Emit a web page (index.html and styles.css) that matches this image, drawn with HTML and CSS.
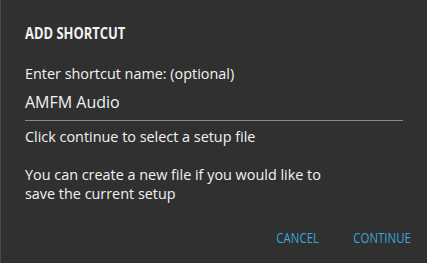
FILE: index.html
```html
<!DOCTYPE html>
<html>
<head>
<meta charset="utf-8">
<link rel="stylesheet" href="styles.css">
</head>
<body>
<div class="dialog">
  <h1 class="title">ADD SHORTCUT</h1>
  <label class="label">Enter shortcut name: (optional)</label>
  <div class="input">AMFM Audio</div>
  <p class="text first">Click continue to select a setup file</p>
  <p class="text">You can create a new file if you would like to<br>save the current setup</p>
  <div class="actions">
    <span class="btn">CANCEL</span>
    <span class="btn">CONTINUE</span>
  </div>
</div>
</body>
</html>
```
FILE: styles.css
```css
html, body {
  margin: 0;
  padding: 0;
  width: 427px;
  height: 263px;
  background: #303030;
  overflow: hidden;
}
.dialog {
  box-sizing: border-box;
  height: 263px;
  border-left: 1px solid #4a4a4a;
  padding: 22px 24px 0 24px;
  font-family: "Open Sans", "Noto Sans", sans-serif;
  color: #f2f2f2;
  display: flex;
  flex-direction: column;
}
.title {
  margin: 0;
  font-size: 15.5px;
  font-weight: 700;
  line-height: 22px;
  transform: scaleX(0.835);
  transform-origin: left;
}
.label {
  margin-top: 20px;
  font-size: 14.4px;
  line-height: 20px;
}
.input {
  margin-top: 7px;
  font-size: 16px;
  line-height: 22px;
  padding-bottom: 7px;
  border-bottom: 1px solid #8a8a8a;
  width: 378px;
}
.text {
  margin: 0;
  font-size: 14.4px;
  line-height: 19px;
}
.text.first {
  margin-top: 6px;
  margin-bottom: 19px;
}
.actions {
  margin-top: auto;
  margin-bottom: 15px;
  display: flex;
  justify-content: flex-end;
  gap: 19px;
  margin-right: -8px;
}
.btn {
  color: #3ba5d8;
  font-size: 14.5px;
  line-height: 20px;
  transform: scaleX(0.79);
  transform-origin: right;
}
```
